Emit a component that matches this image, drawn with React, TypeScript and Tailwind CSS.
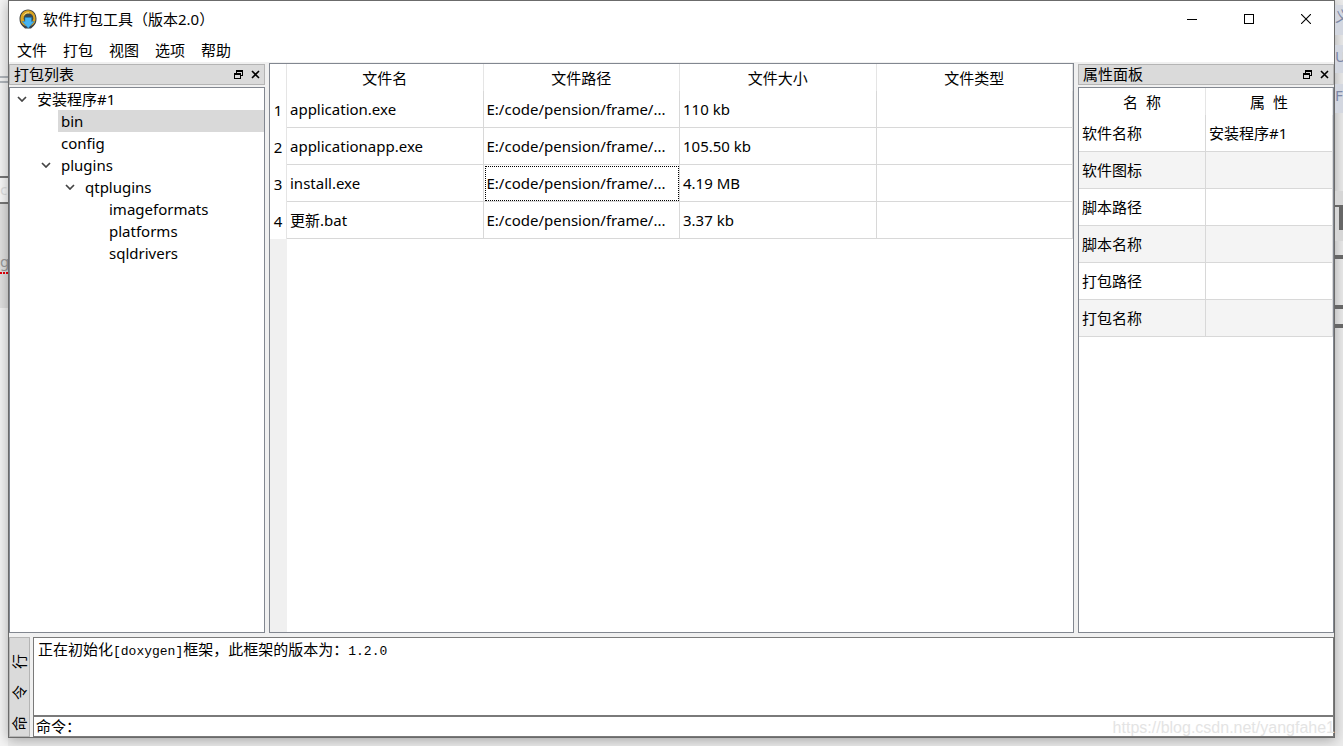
import React, { useState } from 'react';

interface TreeNode {
  name: string;
  depth: number;
  open?: boolean;
}

const MENUS = ['文件', '打包', '视图', '选项', '帮助'];

const TREE: TreeNode[] = [
  { name: '安装程序#1', depth: 0, open: true },
  { name: 'bin', depth: 1 },
  { name: 'config', depth: 1 },
  { name: 'plugins', depth: 1, open: true },
  { name: 'qtplugins', depth: 2, open: true },
  { name: 'imageformats', depth: 3 },
  { name: 'platforms', depth: 3 },
  { name: 'sqldrivers', depth: 3 },
];

const INDENT = ['w-0', 'w-6', 'w-12', 'w-[72px]'];

const FILES = [
  { name: 'application.exe', path: 'E:/code/pension/frame/...', size: '110 kb' },
  { name: 'applicationapp.exe', path: 'E:/code/pension/frame/...', size: '105.50 kb' },
  { name: 'install.exe', path: 'E:/code/pension/frame/...', size: '4.19 MB' },
  { name: '更新.bat', path: 'E:/code/pension/frame/...', size: '3.37 kb' },
];

const PROPS = [
  { label: '软件名称', value: '安装程序#1' },
  { label: '软件图标', value: '' },
  { label: '脚本路径', value: '' },
  { label: '脚本名称', value: '' },
  { label: '打包路径', value: '' },
  { label: '打包名称', value: '' },
];

const AppIcon = () => (
  <svg viewBox="0 0 18 20" className="h-5 w-[18px]">
    <path d="M9 0.5c5 0 8.5 4.2 8.5 9.3 0 3-1 5.6-2.8 7.2L12 19.5H6L3.3 17C1.5 15.4.5 12.8.5 9.8.5 4.7 4 .5 9 .5z" fill="#3b4045" />
    <path d="M9 1.3c4.400 0 7.500 3.700 7.500 8.500 0 2.500-1 4.700-2.600 6L11.500 17h-5L4.100 15.800C2.500 14.500 1.500 12.300 1.500 9.800 1.500 5 4.600 1.300 9 1.300z" fill="#dba522" />
    <path d="M9.500 4.500c3 0 4.800 2 4.800 4.800S12 14 9.500 14 4.700 12 4.700 9.300 6.500 4.500 9.500 4.500z" fill="#3a4a50" />
    <path d="M4.500 6.500C5.800 4.200 8 3.500 10 3.800" stroke="#f6dc86" fill="none" />
    <path d="M6 8.500h6.500v4h2.700L9.300 19.200 3.200 12.500H6z" fill="#45b4f3" stroke="#1c7dbd" strokeWidth="0.5" />
  </svg>
);

const FloatIcon = () => (
  <svg viewBox="0 0 9 9" className="h-[9px] w-[9px]" shapeRendering="crispEdges">
    <path d="M2 0h7v6H7V5h1V2H3v1H2zM0 3h7v6H0zM1 5v3h5V5z" fill="#000" fillRule="evenodd" />
  </svg>
);

const CloseIcon = () => (
  <svg viewBox="0 0 9 9" className="h-[9px] w-[9px]">
    <path d="M1 1l7 7M8 1L1 8" stroke="#000" strokeWidth="1.6" />
  </svg>
);

const Chevron = () => (
  <svg viewBox="0 0 10 6" className="h-[6px] w-[10px]">
    <path d="M1 1l4 4 4-4" stroke="#444" strokeWidth="1.7" fill="none" />
  </svg>
);

const DockTitle = ({ title }: { title: string }) => (
  <div className="mb-[2px] flex h-[21px] items-center border border-[#b4b4b4] bg-[#dadada] px-1">
    <h2 className="flex-1 leading-[19px]">{title}</h2>
    <button aria-label="浮动" className="mr-2"><FloatIcon /></button>
    <button aria-label="关闭"><CloseIcon /></button>
  </div>
);

const App: React.FC = () => {
  const [selected, setSelected] = useState('bin');
  const [command, setCommand] = useState('');

  return (
    <div className="relative flex min-h-screen bg-[#ececec] font-['Noto_Sans','Noto_Sans_CJK_SC',sans-serif] text-[15px] leading-[22px] text-black">
      {/* Desktop visible on the left of the window */}
      <div aria-hidden="true" className="flex w-2 flex-col overflow-hidden bg-[#f4f4f4] text-[#999]">
        <div className="mt-[76px] h-[7px] border-y-2 border-[#b0b5bb]" />
        <div className="mt-[93px] h-7 border-y-2 border-[#777] bg-[#f8f8f8] text-[#ddd]">c</div>
        <div className="h-[104px] bg-[#e0e0e0] pt-[46px]">
          <div className="border-b-2 border-dotted border-red-600">g</div>
        </div>
      </div>

      <div className="mb-2 flex min-w-0 flex-1 flex-col border border-[#6b6b6b] bg-[#f0f0f0] shadow-[0_2px_12px_rgba(0,0,0,0.3)]">
        {/* Title bar */}
        <header className="flex h-9 items-center bg-white pb-px pl-[10px]">
          <AppIcon />
          <h1 className="ml-[6px] flex-1">软件打包工具（版本2.0）</h1>
          <button aria-label="最小化" className="flex h-full w-[57px] items-center justify-center">
            <svg viewBox="0 0 10 10" className="h-[10px] w-[10px]" shapeRendering="crispEdges"><path d="M0 5h10v1H0z" /></svg>
          </button>
          <button aria-label="最大化" className="flex h-full w-[57px] items-center justify-center">
            <svg viewBox="0 0 10 10" className="h-[10px] w-[10px]" shapeRendering="crispEdges"><path d="M0 0h10v10H0zM1 1v8h8V1z" fillRule="evenodd" /></svg>
          </button>
          <button aria-label="关闭窗口" className="flex h-full w-[57px] items-center justify-center">
            <svg viewBox="0 0 10 10" className="h-[10px] w-[10px]"><path d="M0 0l10 10M10 0L0 10" stroke="#000" strokeWidth="1.1" /></svg>
          </button>
        </header>

        <nav className="flex h-[25px] items-center bg-white">
          {MENUS.map((m) => (
            <button key={m} className="px-2">{m}</button>
          ))}
        </nav>

        <div className="flex flex-1 gap-1">
          {/* Package tree */}
          <aside className="flex w-64 flex-col pt-[2px]">
            <DockTitle title="打包列表" />
            <ul className="flex-1 border border-[#828790] bg-white">
              {TREE.map((node) => (
                <li key={node.name} className="flex h-[22px]">
                  <span className={INDENT[node.depth]} />
                  <span className="flex w-6 items-center justify-center">{node.open && <Chevron />}</span>
                  <button
                    onClick={() => setSelected(node.name)}
                    className={`flex-1 pl-[3px] text-left ${selected === node.name ? 'bg-[#d9d9d9]' : ''}`}
                  >
                    {node.name}
                  </button>
                </li>
              ))}
            </ul>
          </aside>

          {/* File list */}
          <main className="flex min-w-0 flex-1 flex-col pt-px">
            <div className="flex flex-1 flex-col border border-[#828790] bg-white">
              <table className="w-full table-fixed border-separate border-spacing-0 text-left">
                <thead>
                  <tr className="h-[27px]">
                    <th className="w-[17px] border-r border-[#e5e5e5] p-0" />
                    {['文件名', '文件路径', '文件大小', '文件类型'].map((h) => (
                      <th key={h} className="border-r border-[#e5e5e5] p-0 text-center font-normal">{h}</th>
                    ))}
                  </tr>
                </thead>
                <tbody>
                  {FILES.map((f, i) => (
                    <tr key={f.name} className="h-[37px]">
                      <th className="border-r border-[#e5e5e5] p-0 text-center font-normal">{i + 1}</th>
                      <td className="border-b border-r border-[#d8d8d8] px-[3px] py-0">{f.name}</td>
                      <td className={`truncate border-b border-r border-[#d8d8d8] px-[3px] py-0 ${i === 2 ? 'outline-1 -outline-offset-2 outline-dotted outline-black' : ''}`}>
                        {f.path}
                      </td>
                      <td className="border-b border-r border-[#d8d8d8] px-[3px] py-0">{f.size}</td>
                      <td className="border-b border-r border-[#d8d8d8] p-0" />
                    </tr>
                  ))}
                </tbody>
              </table>
              <div className="w-[17px] flex-1 bg-[#f0f0f0]" />
            </div>
          </main>

          {/* Properties */}
          <aside className="flex w-64 flex-col pt-[2px]">
            <DockTitle title="属性面板" />
            <div className="flex-1 border border-[#828790] bg-white">
              <table className="w-full table-fixed border-separate border-spacing-0 text-left">
                <thead>
                  <tr className="h-[27px]">
                    <th className="border-r border-[#e5e5e5] p-0 text-center font-normal whitespace-pre">名  称</th>
                    <th className="border-r border-[#e5e5e5] p-0 text-center font-normal whitespace-pre">属  性</th>
                  </tr>
                </thead>
                <tbody>
                  {PROPS.map((p) => (
                    <tr key={p.label} className="h-[37px] even:bg-[#f4f4f4]">
                      <td className="border-b border-r border-[#d8d8d8] px-[3px] py-0">{p.label}</td>
                      <td className="border-b border-r border-[#d8d8d8] px-[3px] py-0">{p.value}</td>
                    </tr>
                  ))}
                </tbody>
              </table>
            </div>
          </aside>
        </div>

        {/* Command line dock */}
        <section className="mt-1 flex h-[100px] gap-[3px]">
          <h2 className="flex w-[21px] rotate-180 items-center gap-4 border border-[#b4b4b4] bg-[#dadada] pt-[5px] [text-orientation:sideways] [writing-mode:vertical-rl]">
            <span className="leading-[15px]">命</span>
            <span className="leading-[15px]">令</span>
            <span className="leading-[15px]">行</span>
          </h2>
          <div className="flex flex-1 flex-col">
            <div role="log" className="flex-1 border border-[#7a7a7a] bg-white pl-1">
              正在初始化<span className="font-['Liberation_Mono',monospace] text-[13px]">[doxygen]</span>框架，此框架的版本为：<span className="font-['Liberation_Mono',monospace] text-[13px]">1.2.0</span>
            </div>
            <div className="flex h-[21px] border border-[#7a7a7a] bg-white pl-[2px] leading-[18px]">
              <label htmlFor="command">命令：</label>
              <input
                id="command"
                className="h-4 flex-1 outline-none"
                value={command}
                onChange={(e) => setCommand(e.target.value)}
              />
            </div>
          </div>
        </section>
      </div>

      {/* Desktop visible on the right of the window */}
      <div aria-hidden="true" className="flex w-2 flex-col overflow-hidden text-[#7d87a6]">
        <div className="mt-[5px] h-[30px] bg-[#d3d7e0]">义</div>
        <div className="mt-[10px] h-7 bg-[#d3d7e0]">U</div>
        <div className="mt-[11px] h-[29px] bg-[#d3d7e0]">F</div>
        <div className="mt-[78px] h-[50px] bg-[#d6d6d6] pt-[14px]">
          <div className="h-[25px] border-r-4 border-t-2 border-[#666]" />
        </div>
        <div className="mt-[14px] h-1 bg-[#666]" />
        <div className="mt-[46px] h-[23px] border-y-4 border-[#666]" />
      </div>

      <span className="pointer-events-none absolute right-2 bottom-2 font-['Liberation_Sans',sans-serif] text-[16px] leading-5 text-[#e4e4e4]">
        https://blog.csdn.net/yangfahe1
      </span>
    </div>
  );
};

export default App;
